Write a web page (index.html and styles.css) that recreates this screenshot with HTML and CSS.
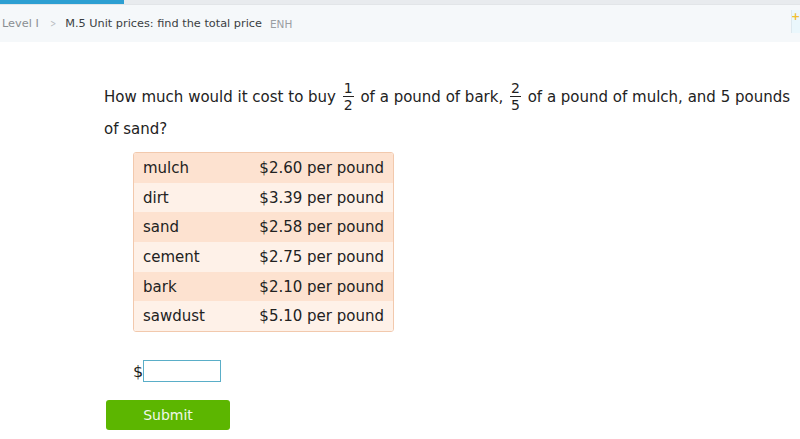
FILE: index.html
```html
<!DOCTYPE html>
<html>
<head>
<meta charset="utf-8">
<link rel="stylesheet" href="styles.css">
</head>
<body>
<div class="progress"><div class="progress-fill"></div></div>
<div class="crumbs">
  <span class="level">Level I</span>
  <span class="sep">&gt;</span>
  <span class="skill">M.5 Unit prices: find the total price</span>
  <span class="code">ENH</span>
  <div class="side-tab"><span class="plus">+</span></div>
</div>
<div class="content">
  <p class="question">How much would it cost to buy <span class="frac"><span class="num">1</span><span class="den">2</span></span> of a pound of bark, <span class="frac"><span class="num">2</span><span class="den">5</span></span> of a pound of mulch, and 5 pounds of sand?</p>
  <table class="prices">
    <tr class="dark"><td>mulch</td><td class="price">$2.60 per pound</td></tr>
    <tr class="light"><td>dirt</td><td class="price">$3.39 per pound</td></tr>
    <tr class="dark"><td>sand</td><td class="price">$2.58 per pound</td></tr>
    <tr class="light"><td>cement</td><td class="price">$2.75 per pound</td></tr>
    <tr class="dark"><td>bark</td><td class="price">$2.10 per pound</td></tr>
    <tr class="light"><td>sawdust</td><td class="price">$5.10 per pound</td></tr>
  </table>
  <div class="answer"><span class="dollar">$</span><input class="box" type="text"></div>
  <button class="submit">Submit</button>
</div>
</body>
</html>
```
FILE: styles.css
```css
html, body { margin: 0; padding: 0; background: #fff; }
body { font-family: "DejaVu Sans", Verdana, sans-serif; color: #222; width: 800px; height: 439px; overflow: hidden; }
.progress { height: 4px; background: #e8ebee; border-bottom: 1px solid #e2e5e8; }
.progress-fill { width: 124px; height: 4px; background: #2d9fd2; }
.crumbs { position: relative; height: 37px; background: #f5f8fa; display: flex; align-items: center; font-size: 11.3px; padding-left: 2px; }
.level { color: #8a8e92; }
.sep { color: #b8bcc0; margin: 0 8px 0 10px; font-size: 10px; transform: scaleX(0.7); display: inline-block; }
.skill { color: #3a3e42; }
.code { color: #9a9ea2; margin-left: 8px; font-size: 10.5px; }
.side-tab { position: absolute; right: 0; top: 5px; width: 8px; height: 23px; background: #eaf7fc; border-left: 1px solid #dde8ee; overflow: hidden; }
.plus { position: absolute; left: -1px; top: 0; color: #f0c030; font-size: 11px; font-weight: bold; }
.content { padding-left: 104px; }
.question { margin: 39px 0 0 0; font-size: 15px; line-height: 30px; width: 690px; color: #222; }
.frac { display: inline-flex; flex-direction: column; align-items: center; vertical-align: middle; font-size: 14px; line-height: 16px; margin: 0 2px; position: relative; top: -1px; }
.frac .num { border-bottom: 1px solid #222; padding: 0 1px; }
.frac .den { padding: 0 1px; }
.prices { margin: 8px 0 0 29px; border-collapse: separate; border-spacing: 0; border: 1px solid #f2c9ad; border-radius: 3px; font-size: 15px; width: 261px; overflow: hidden; }
.prices td { height: 29.7px; padding: 0 0 0 9px; color: #222; }
.prices td.price { text-align: right; padding: 0 9px 0 0; }
.dark td { background: #fde2d0; }
.light td { background: #fef1e8; }
.answer { display: flex; align-items: center; margin: 28px 0 0 29px; font-size: 16px; }
.dollar { color: #222; margin-right: 0; }
.box { width: 76px; height: 20px; padding: 0; margin: 0; border: 1px solid #5aaec8; background: #fff; box-sizing: content-box; }
.submit { display: block; margin: 18px 0 0 2px; width: 124px; height: 30px; background: #5cb600; border: none; border-radius: 3px; color: #f0f8e8; font-family: "DejaVu Sans", Verdana, sans-serif; font-size: 14px; padding: 0; }
```
